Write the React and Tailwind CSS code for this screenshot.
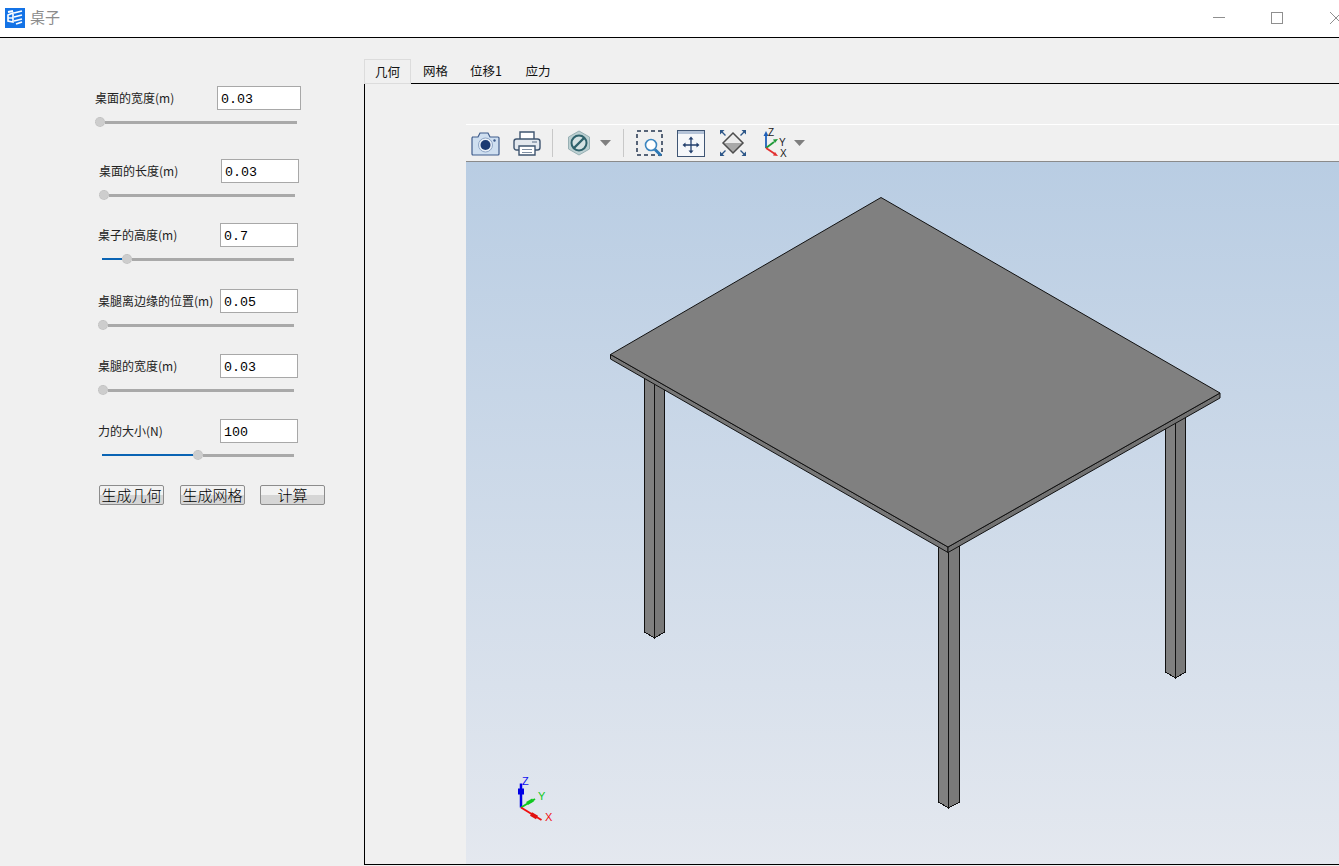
const CJK = "font-['Noto_Sans_CJK_SC','Noto_Sans',sans-serif]";

function Slider({ fill = 0, width }) {
  return (
    <div className={`flex items-center h-[12px] ${width}`}>
      {fill > 0 && <div className="h-[2px] bg-[#0a64b4]" style={{ width: fill }} />}
      <div className="w-[10px] h-[10px] rounded-full bg-[#cdcdcd] border border-dotted border-[#bdbdbd] shrink-0" />
      <div className="h-[3px] flex-1 bg-[#a9a9a9]" />
    </div>
  );
}

function Field({ label, value, className, inputWidth, sliderClass, sliderWidth, fill }) {
  return (
    <div className={`flex flex-col ${className}`}>
      <div className="flex items-center h-[24px]">
        <span className={`${CJK} text-[12px] text-[#222] whitespace-nowrap w-[122px]`}>{label}</span>
        <input
          readOnly
          value={value}
          className={`h-[24px] ${inputWidth} bg-white border border-[#a8a8a8] pl-[3px] pt-[2px] outline-none font-['Liberation_Mono',monospace] text-[13.33px] text-black`}
        />
      </div>
      <div className={`mt-[6px] ${sliderClass}`}>
        <Slider fill={fill} width={sliderWidth} />
      </div>
    </div>
  );
}

function Btn({ children, className }) {
  return (
    <button className={`h-[20px] w-[65px] rounded-[2px] border border-[#8c8c8c] bg-linear-to-b from-[#f2f2f2] from-50% to-[#d6d6d6] to-50% ${CJK} font-light text-[15px] leading-[18px] text-black whitespace-nowrap ${className}`}>
      {children}
    </button>
  );
}

function TitleIcon() {
  return (
    <svg width="20" height="20" viewBox="0 0 20 20" className="shrink-0">
      <rect width="20" height="20" fill="#1473e6" />
      <path d="M3 7l5-2 0 9-5-1z" fill="none" stroke="#fff" strokeWidth="1.6" />
      <path d="M9 5l8-2M9 9l8-2M9 13l8-2M11 16l6-2M3 4l5-1" stroke="#fff" strokeWidth="1.8" fill="none" />
      <path d="M3 10h5" stroke="#fff" strokeWidth="1.4" />
    </svg>
  );
}

function Caret() {
  return (
    <svg width="11" height="6" viewBox="0 0 11 6" className="shrink-0">
      <path d="M0 0h11L5.5 6z" fill="#7f7f7f" />
    </svg>
  );
}

function Camera() {
  return (
    <svg width="29" height="25" viewBox="0 0 29 25">
      <path d="M1 6h6l2-4h8l2 4h8a1 1 0 0 1 1 1v16a1 1 0 0 1-1 1H2a1 1 0 0 1-1-1V7a1 1 0 0 1 1-1z" fill="#cfdff0" stroke="#3f5c8c" strokeWidth="1.2" />
      <circle cx="14.5" cy="14" r="7" fill="#e9f0f8" stroke="#8fa6c6" />
      <circle cx="14.5" cy="14" r="5" fill="#1c3a72" />
      <circle cx="23.5" cy="9.5" r="1.2" fill="#3f5c8c" />
    </svg>
  );
}

function Printer() {
  return (
    <svg width="28" height="26" viewBox="0 0 28 26">
      <path d="M7 9V2h14v7" fill="#fff" stroke="#3f5570" strokeWidth="1.4" />
      <rect x="1" y="9" width="26" height="11" rx="2.5" fill="#e3e8ee" stroke="#3f5570" strokeWidth="1.4" />
      <path d="M19 12h5" stroke="#7f8fa3" strokeWidth="1.4" />
      <path d="M6 16h16v9H6z" fill="#fff" stroke="#3f5570" strokeWidth="1.4" />
      <path d="M9 19.500h10M9 22.500h10" stroke="#7f8fa3" />
    </svg>
  );
}

function Hex() {
  return (
    <svg width="24" height="26" viewBox="0 0 24 26">
      <path d="M12 1l10.500 6v12L12 25 1.500 19V7z" fill="#bcd0d2" stroke="#98b0b4" />
      <circle cx="12" cy="13" r="7.500" fill="#d5e2e3" stroke="#2f626c" strokeWidth="2" />
      <path d="M7 18L17 8" stroke="#2f626c" strokeWidth="2.400" />
    </svg>
  );
}

function ZoomBox() {
  return (
    <svg width="28" height="27" viewBox="0 0 28 27">
      <rect x="1" y="1" width="25" height="24" fill="none" stroke="#23344f" strokeWidth="1.500" strokeDasharray="4 3" />
      <circle cx="15" cy="15" r="5.500" fill="#fff" stroke="#3c86c0" strokeWidth="1.600" />
      <path d="M19 19.500l6 6" stroke="#2c78b6" strokeWidth="3" />
    </svg>
  );
}

function Pan() {
  return (
    <svg width="28" height="27" viewBox="0 0 28 27">
      <rect x="0.500" y="0.500" width="27" height="26" fill="#f5f7fa" stroke="#3f5574" />
      <rect x="1" y="1" width="26" height="3" fill="#b4c3d8" />
      <path d="M14 8v14M7 15h14" stroke="#23406e" strokeWidth="1.300" />
      <path d="M14 6.500l-2.500 3h5zM14 23.500l-2.500-3h5zM5.500 15l3-2.500v5zM22.500 15l-3-2.500v5z" fill="#23406e" />
    </svg>
  );
}

function Fit() {
  return (
    <svg width="28" height="30" viewBox="0 0 28 30">
      <path d="M14 5L24 15H4z" fill="#ececec" />
      <path d="M14 25L24 15H4z" fill="#a9a9a9" />
      <path d="M14 5L24 15L14 25L4 15z" fill="none" stroke="#4d4d4d" strokeWidth="1.500" />
      <path d="M1 2h4.500l-4.500 4.500zM27 2h-4.500l4.500 4.500zM1 28h4.500l-4.500-4.500zM27 28h-4.500l4.500-4.500z" fill="#2c5688" />
      <path d="M3 4l3.500 3.500M25 4l-3.500 3.500M3 26l3.500-3.500M25 26l-3.500-3.500" stroke="#2c5688" strokeWidth="1.400" />
    </svg>
  );
}

function ToolAxes() {
  return (
    <svg width="24" height="30" viewBox="0 0 24 30">
      <path d="M3 20V7" stroke="#1f5fb8" strokeWidth="1.800" />
      <path d="M3 3L0.500 8h5z" fill="#1f5fb8" />
      <path d="M3 20l8-6" stroke="#1f9a3a" strokeWidth="1.800" />
      <path d="M15 11l-5 .5 2 3.500z" fill="#1f9a3a" />
      <path d="M3 20l9 6" stroke="#e23030" strokeWidth="1.800" />
      <path d="M15 28l-5-.5 2-3.500z" fill="#e23030" />
      <text x="5" y="8" fontSize="10" fontFamily="Liberation Sans" fill="#222">Z</text>
      <text x="16" y="18" fontSize="10" fontFamily="Liberation Sans" fill="#222">Y</text>
      <text x="17" y="29" fontSize="10" fontFamily="Liberation Sans" fill="#222">X</text>
    </svg>
  );
}

// one leg: left/center/right x, y where it leaves the table, y of the side corners
function Leg({ l, c, r, top, bottom }) {
  return (
    <g stroke="#111" strokeWidth="1" shapeRendering="crispEdges">
      <path d={`M${l} ${top}L${c} ${top}L${c} ${bottom + 6}L${l} ${bottom}z`} fill="#808080" />
      <path d={`M${c} ${top}L${r} ${top}L${r} ${bottom}L${c} ${bottom + 6}z`} fill="#797979" />
    </g>
  );
}

function TableModel() {
  // coordinates are the viewport's minus the gradient's origin (466, 162)
  return (
    <svg width="873" height="702" viewBox="0 0 873 702" className="block">
      <Leg l={178.500} c={188.500} r={198.500} top={210} bottom={470} />
      <Leg l={472.500} c={482.500} r={493.500} top={380} bottom={640} />
      <Leg l={699.500} c={709.500} r={719.500} top={250} bottom={510} />
      <g stroke="#111" strokeWidth="1" strokeLinejoin="round">
        <path d="M144.500 192.500L482 385L482 390.500L144.500 197z" fill="#777" />
        <path d="M482 385L754 231L754 236L482 390.500z" fill="#727272" />
        <path d="M415 35.500L754 231L482 385L144.500 192.500z" fill="#808080" />
      </g>
      <g transform="translate(49,608.500)">
        <path d="M6 37V13" stroke="#0000e6" strokeWidth="2.500" />
        <rect x="3" y="18" width="6" height="6" fill="#0000e6" />
        <path d="M6 37L20 28.500" stroke="#10c820" strokeWidth="2" />
        <path d="M12 33l6-3.500" stroke="#10c820" strokeWidth="3.500" />
        <path d="M6 37L26.500 49.500" stroke="#f01010" strokeWidth="2" />
        <path d="M16 43.500l6 3.500" stroke="#e01010" strokeWidth="4" />
        <text x="7" y="14.500" fontSize="11" fontFamily="Liberation Sans" fill="#1010f0">Z</text>
        <text x="23" y="29.500" fontSize="11" fontFamily="Liberation Sans" fill="#10c820">Y</text>
        <text x="30" y="50" fontSize="11" fontFamily="Liberation Sans" fill="#f01010">X</text>
      </g>
    </svg>
  );
}

export default function App() {
  return (
    <div className="w-[1339px] h-[866px] overflow-hidden flex flex-col bg-[#f0f0f0]">
      {/* title bar */}
      <div className="h-[38px] shrink-0 bg-white border-b border-black flex items-center pl-[5px] pb-[2px]">
        <TitleIcon />
        <span className={`${CJK} ml-[5px] text-[15px] text-[#8c8c8c]`}>桌子</span>
        <div className="ml-auto flex items-center text-[#8f8f8f]">
          <div className="w-[12px] h-px bg-[#8f8f8f]" />
          <div className="ml-[46px] w-[12px] h-[12px] border border-[#8f8f8f]" />
          <svg width="9" height="12" viewBox="0 0 9 12" className="ml-[47px]">
            <path d="M0 0l6 6 3 3M0 12l6-6 3-3" stroke="#8f8f8f" fill="none" />
          </svg>
        </div>
      </div>

      <div className="flex flex-1 min-h-0">
        {/* parameters */}
        <div className="w-[364px] shrink-0 flex flex-col pt-[48px]">
          <Field className="ml-[95px]" label="桌面的宽度(m)" value="0.03" inputWidth="w-[84px]" sliderWidth="w-[202px]" />
          <Field className="ml-[99px] mt-[31px]" label="桌面的长度(m)" value="0.03" inputWidth="w-[78px]" sliderWidth="w-[196px]" />
          <Field className="ml-[98px] mt-[22px]" label="桌子的高度(m)" value="0.7" inputWidth="w-[78px]" sliderClass="ml-[4px]" sliderWidth="w-[192px]" fill={20} />
          <Field className="ml-[98px] mt-[24px]" label="桌腿离边缘的位置(m)" value="0.05" inputWidth="w-[78px]" sliderWidth="w-[196px]" />
          <Field className="ml-[98px] mt-[23px]" label="桌腿的宽度(m)" value="0.03" inputWidth="w-[78px]" sliderWidth="w-[196px]" />
          <Field className="ml-[98px] mt-[23px]" label="力的大小(N)" value="100" inputWidth="w-[78px]" sliderClass="ml-[4px]" sliderWidth="w-[192px]" fill={91} />
          <div className="ml-[99px] mt-[24px] flex">
            <Btn>生成几何</Btn>
            <Btn className="ml-[16px]">生成网格</Btn>
            <Btn className="ml-[15px]">计算</Btn>
          </div>
        </div>

        {/* tabs and viewer */}
        <div className="flex-1 min-w-0 flex flex-col pt-[21px] pb-px">
          <div className={`flex h-[25px] shrink-0 items-end border-b border-black ${CJK} text-[12.5px] text-[#111]`}>
            <div className="w-[47px] h-[25px] -mb-px pt-px bg-[#f0f0f0] border border-[#dcdcdc] flex items-center justify-center">几何</div>
            <div className="w-[49px] h-[24px] pt-px flex items-center justify-center">网格</div>
            <div className="w-[52px] h-[24px] pt-px flex items-center justify-center">位移1</div>
            <div className="w-[52px] h-[24px] pt-px flex items-center justify-center">应力</div>
          </div>
          <div className="flex-1 min-h-0 border-l border-b border-black pl-[101px] pt-[40px] flex flex-col">
            <div className="h-[38px] shrink-0 bg-[#f0f0f0] border-t border-white border-b border-b-[#8a8a8a] flex items-center pl-[5px]">
              <Camera />
              <div className="ml-[13px]"><Printer /></div>
              <div className="ml-[11px] w-px h-[28px] bg-[#c8c8c8]" />
              <div className="ml-[14px]"><Hex /></div>
              <div className="ml-[9px]"><Caret /></div>
              <div className="ml-[12px] w-px h-[28px] bg-[#c8c8c8]" />
              <div className="ml-[12px]"><ZoomBox /></div>
              <div className="ml-[13px]"><Pan /></div>
              <div className="ml-[14px]"><Fit /></div>
              <div className="ml-[16px]"><ToolAxes /></div>
              <div className="ml-[7px]"><Caret /></div>
            </div>
            <div className="flex-1 min-h-0 overflow-hidden bg-linear-to-b from-[#b9cde3] to-[#e4e8ef]">
              <TableModel />
            </div>
          </div>
        </div>
      </div>
    </div>
  );
}
